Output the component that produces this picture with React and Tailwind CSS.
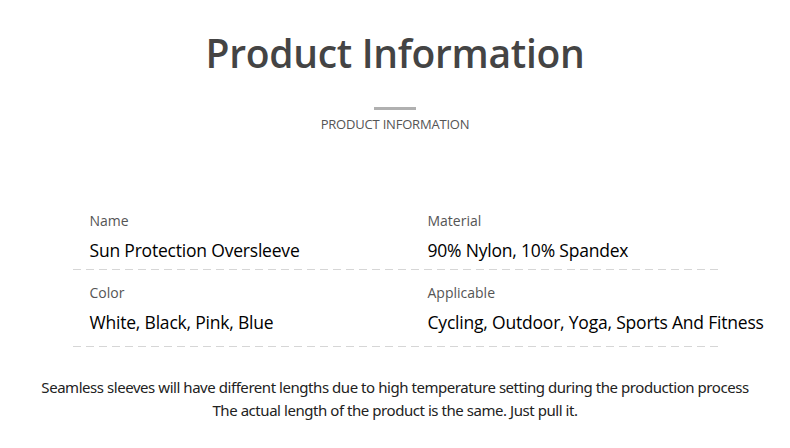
import React from "react";

const rows = [
  [
    { label: "Name", value: "Sun Protection Oversleeve" },
    { label: "Material", value: "90% Nylon, 10% Spandex" },
  ],
  [
    { label: "Color", value: "White, Black, Pink, Blue" },
    { label: "Applicable", value: "Cycling, Outdoor, Yoga, Sports And Fitness" },
  ],
];

export default function App() {
  return (
    <div className="w-[790px] h-[448px] bg-white overflow-hidden flex flex-col items-center font-['Open_Sans',sans-serif]">
      {/* Heading */}
      <h1 className="mt-[25px] text-[39px] leading-[56px] font-semibold text-[#444] tracking-[-0.3px]">
        Product Information
      </h1>
      <div className="mt-[26px] w-[42px] h-[3px] bg-[#b0b0b0]" />
      <p className="mt-[5px] text-[13px] leading-[18px] text-[#555] tracking-[-0.2px]">PRODUCT INFORMATION</p>

      {/* Info table */}
      <div className="mt-[79px] w-[646px] ml-[1px]">
        {rows.map((row, i) => (
          <div key={i} className={i === 0 ? "mb-[14px]" : ""}>
            <div className={`flex ${i === 0 ? "pb-[8px]" : "pb-[13px]"}`}>
              {row.map((cell, j) => (
                <div key={j} className={j === 0 ? "w-[355px] shrink-0 pl-[17px]" : "flex-1"}>
                  <div className="text-[14px] leading-[18px] text-[#555] font-medium">{cell.label}</div>
                  <div className="mt-[9px] text-[17.5px] leading-[22px] text-black font-medium whitespace-nowrap tracking-[-0.2px]">
                    {cell.value}
                  </div>
                </div>
              ))}
            </div>
            <div className="h-px bg-[repeating-linear-gradient(90deg,#d6d6d6_0_8px,transparent_8px_13px)]" />
          </div>
        ))}
      </div>

      {/* Note */}
      <div className="mt-[29px] text-center text-[15px] leading-[23px] text-[#222] tracking-[-0.45px] font-['Noto_Sans',sans-serif]">
        <p>Seamless sleeves will have different lengths due to high temperature setting during the production process</p>
        <p>The actual length of the product is the same. Just pull it.</p>
      </div>
    </div>
  );
}
